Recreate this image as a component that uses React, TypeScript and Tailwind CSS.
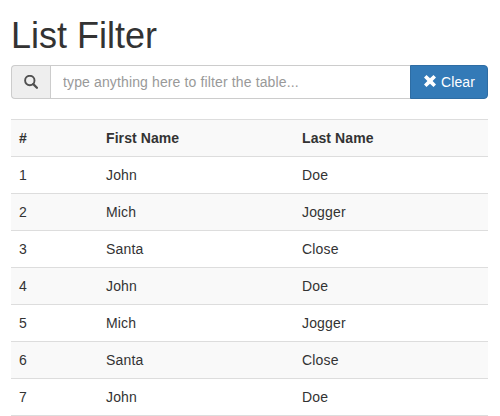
const people = [
  ["John", "Doe"],
  ["Mich", "Jogger"],
  ["Santa", "Close"],
  ["John", "Doe"],
  ["Mich", "Jogger"],
  ["Santa", "Close"],
  ["John", "Doe"],
];

function SearchIcon() {
  return (
    <svg width="14" height="14" viewBox="0 0 14 14" fill="none" stroke="#505050" className="block">
      <circle cx="5.8" cy="5.5" r="4.7" strokeWidth="1.9" />
      <path d="M9.3 9.1 L12.9 12.7" strokeWidth="2.3" strokeLinecap="round" />
    </svg>
  );
}

function RemoveIcon() {
  return (
    <svg width="14" height="14" viewBox="0 0 14 14" fill="#fff" className="-mt-0.5 block">
      <path d="M3.5 1 L7 4.3 L10.5 1 L13 3.5 L9.6 7 L13 10.5 L10.5 13 L7 9.7 L3.5 13 L1 10.5 L4.4 7 L1 3.5 Z" />
    </svg>
  );
}

export default function App() {
  return (
    <main className="h-[416px] overflow-hidden bg-white pl-[11px] pr-3 pt-4 font-['Liberation_Sans',Arial,sans-serif] text-sm leading-5 text-[#333]">
      <h1 className="mb-[10px] text-[36px] font-normal leading-[39px]">List Filter</h1>
      <div className="flex h-[34px]">
        <span className="flex w-[39px] items-center justify-center rounded-l border border-r-0 border-[#ccc] bg-[#eee]">
          <SearchIcon />
        </span>
        <input
          className="min-w-0 flex-1 border border-[#ccc] px-3 tracking-[0.13px] outline-none placeholder:text-[#999]"
          placeholder="type anything here to filter the table..."
        />
        <button className="-ml-px flex w-[78px] items-center justify-center gap-1 rounded-r border border-[#2e6da4] bg-[#337ab7] tracking-[0.1px] text-white">
          <RemoveIcon />
          Clear
        </button>
      </div>
      <table className="mt-5 w-full table-fixed border-collapse text-left">
        <colgroup>
          <col className="w-[87px]" />
          <col className="w-[196px]" />
          <col />
        </colgroup>
        <tbody>
          <tr className="h-[37px] border-y border-[#ddd] bg-[#f9f9f9] tracking-[0.08px]">
            <th className="px-2">#</th>
            <th className="px-2">First Name</th>
            <th className="px-2">Last Name</th>
          </tr>
          {people.map(([first, last], i) => (
            <tr key={i} className="h-[37px] border-b border-[#ddd] tracking-[0.16px] even:bg-white odd:bg-[#f9f9f9]">
              <td className="px-2">{i + 1}</td>
              <td className="px-2">{first}</td>
              <td className="px-2">{last}</td>
            </tr>
          ))}
        </tbody>
      </table>
    </main>
  );
}
